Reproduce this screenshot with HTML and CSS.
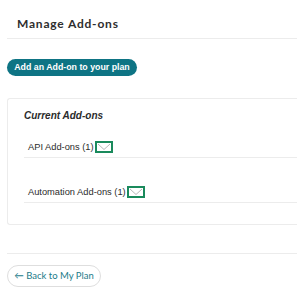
FILE: index.html
```html
<!DOCTYPE html>
<html lang="en">
<head>
    <meta charset="UTF-8">
    <meta name="viewport" content="width=device-width, initial-scale=1.0">
    <title>Manage Add-ons</title>
    <link rel="stylesheet" href="styles.css">
</head>
<body>
    <div class="page">
        <h1 class="page-title">Manage Add-ons</h1>

        <div class="actions">
            <button class="add-btn">Add an Add-on to your plan</button>
        </div>

        <div class="card">
            <h2 class="card-title">Current Add-ons</h2>

            <div class="addon-row">
                <span class="addon-name">API Add-ons (1)</span>
                <span class="toggle">
                    <svg width="14" height="8" viewBox="0 0 14 8"><path d="M1 1 L7 6.5 L13 1" fill="none" stroke="#b8b8b8" stroke-width="1"/></svg>
                </span>
            </div>

            <div class="addon-row">
                <span class="addon-name">Automation Add-ons (1)</span>
                <span class="toggle">
                    <svg width="14" height="8" viewBox="0 0 14 8"><path d="M1 1 L7 6.5 L13 1" fill="none" stroke="#b8b8b8" stroke-width="1"/></svg>
                </span>
            </div>
        </div>

        <div class="footer">
            <a href="#" class="back-btn">&larr; Back to My Plan</a>
        </div>
    </div>
</body>
</html>
```

FILE: styles.css
```css
:root {
    --teal: #0e7484;
    --line: #ececec;
    --text: #2b2b2b;
    --focus: #1a8a5c;
}

body {
    margin: 0;
    font-family: 'Liberation Sans', Arial, sans-serif;
    color: var(--text);
    background: #fff;
    overflow-x: hidden;
}

.page {
    padding-left: 7px;
}

.page-title {
    margin: 0;
    padding: 16px 0 0 10px;
    height: 22px;
    font-family: 'Lato', sans-serif;
    font-size: 12px;
    font-weight: 700;
    letter-spacing: 0.8px;
    color: #2e2e2e;
    border-bottom: 1px solid var(--line);
}

.actions {
    padding-top: 17px;
    height: 42px;
}

.add-btn {
    height: 17px;
    width: 130px;
    padding: 0;
    border: none;
    border-radius: 9px;
    background: var(--teal);
    color: #fff;
    font-family: 'Liberation Sans', Arial, sans-serif;
    font-size: 8.8px;
    font-weight: 700;
}

.card {
    border: 1px solid var(--line);
    border-right: none;
    border-radius: 3px 0 0 3px;
    padding: 11px 0 21px 16px;
}

.card-title {
    margin: 0 0 15px;
    font-size: 10px;
    font-weight: 700;
    font-style: italic;
    line-height: 12px;
}

.addon-row {
    display: flex;
    align-items: center;
    padding-left: 4px;
    height: 20px;
    border-bottom: 1px solid var(--line);
}

.addon-row + .addon-row {
    margin-top: 24px;
}

.addon-name {
    font-size: 9.3px;
    padding-right: 1px;
}

.toggle {
    display: flex;
    align-items: center;
    justify-content: center;
    width: 14px;
    height: 8px;
    border: 2px solid var(--focus);
}

.footer {
    margin-top: 28px;
    border-top: 1px solid var(--line);
    padding-top: 11px;
}

.back-btn {
    display: inline-block;
    width: 92px;
    height: 20px;
    line-height: 20px;
    text-align: center;
    border: 1px solid #dedede;
    border-radius: 11px;
    font-family: 'Lato', sans-serif;
    font-size: 9.5px;
    color: #1b7b8a;
    text-decoration: none;
}
```
